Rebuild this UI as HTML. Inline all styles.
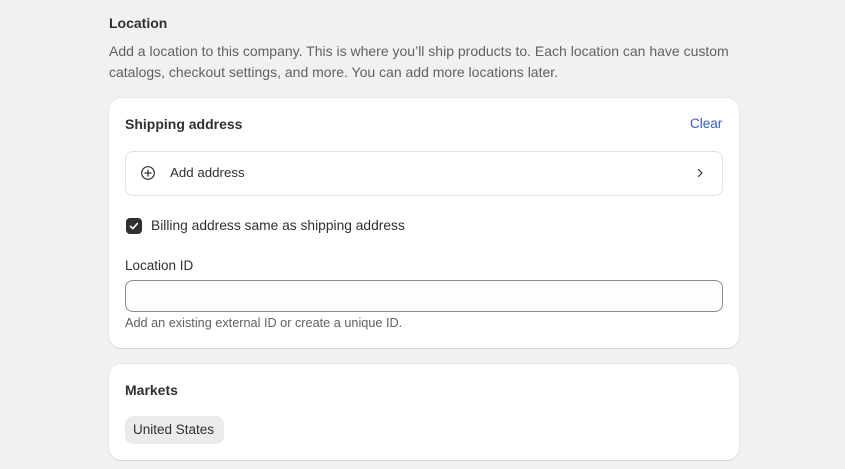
<!DOCTYPE html>
<html><head><style>
*{margin:0;padding:0;box-sizing:border-box}
body{width:845px;height:469px;background:#f1f1f1;font-family:"Liberation Sans",sans-serif;color:#303030;position:relative;overflow:hidden}
.a{position:absolute;white-space:nowrap}
.card{position:absolute;left:109px;width:630px;background:#fff;border-radius:12px;box-shadow:0 1px 0 #d4d4d4,0 0 0 1px #e6e6e6}
</style></head><body>
<div class="a" style="left:109px;top:15px;font-size:14px;font-weight:bold;color:#303030">Location</div>
<div class="a" style="left:109px;top:41px;font-size:14px;color:#616161;line-height:21px">Add a location to this company. This is where you’ll ship products to. Each location can have custom<br>catalogs, checkout settings, and more. You can add more locations later.</div>
<div class="card" style="top:98px;height:250px"></div>
<div class="a" style="left:125px;top:116px;font-size:14px;font-weight:bold">Shipping address</div>
<div class="a" style="left:690px;top:116px;font-size:13.5px;color:#2a5ccf">Clear</div>
<div class="a" style="left:125px;top:151px;width:598px;height:45px;border:1px solid #e3e3e3;border-radius:8px"></div>
<svg class="a" style="left:140px;top:165px" width="16" height="16" viewBox="0 0 16 16"><circle cx="8" cy="8" r="6.3" fill="none" stroke="#303030" stroke-width="1.2"/><path d="M8 5v6M5 8h6" stroke="#303030" stroke-width="1.2" stroke-linecap="round"/></svg>
<div class="a" style="left:170px;top:165px;font-size:13.3px">Add address</div>
<svg class="a" style="left:693px;top:166px" width="14" height="14" viewBox="0 0 14 14"><path d="M5.5 3.5l3.5 3.5-3.5 3.5" fill="none" stroke="#303030" stroke-width="1.2" stroke-linecap="round" stroke-linejoin="round"/></svg>
<div class="a" style="left:126px;top:218px;width:16px;height:16px;background:#303030;border-radius:4px"></div>
<svg class="a" style="left:126px;top:218px" width="16" height="16" viewBox="0 0 16 16"><path d="M4.5 8.3l2.3 2.3 4.5-5" fill="none" stroke="#fff" stroke-width="1.6" stroke-linecap="round" stroke-linejoin="round"/></svg>
<div class="a" style="left:151px;top:218px;font-size:13.8px">Billing address same as shipping address</div>
<div class="a" style="left:125px;top:258px;font-size:13.5px">Location ID</div>
<div class="a" style="left:125px;top:280px;width:598px;height:32px;border:1px solid #8a8a8a;border-radius:8px;background:#fdfdfd"></div>
<div class="a" style="left:125px;top:316px;font-size:12.7px;color:#616161">Add an existing external ID or create a unique ID.</div>
<div class="card" style="top:364px;height:96px"></div>
<div class="a" style="left:125px;top:382px;font-size:14px;font-weight:bold">Markets</div>
<div class="a" style="left:125px;top:416px;width:99px;height:28px;background:#ebebeb;border-radius:8px"></div>
<div class="a" style="left:133px;top:422px;font-size:13.5px">United States</div>
</body></html>
